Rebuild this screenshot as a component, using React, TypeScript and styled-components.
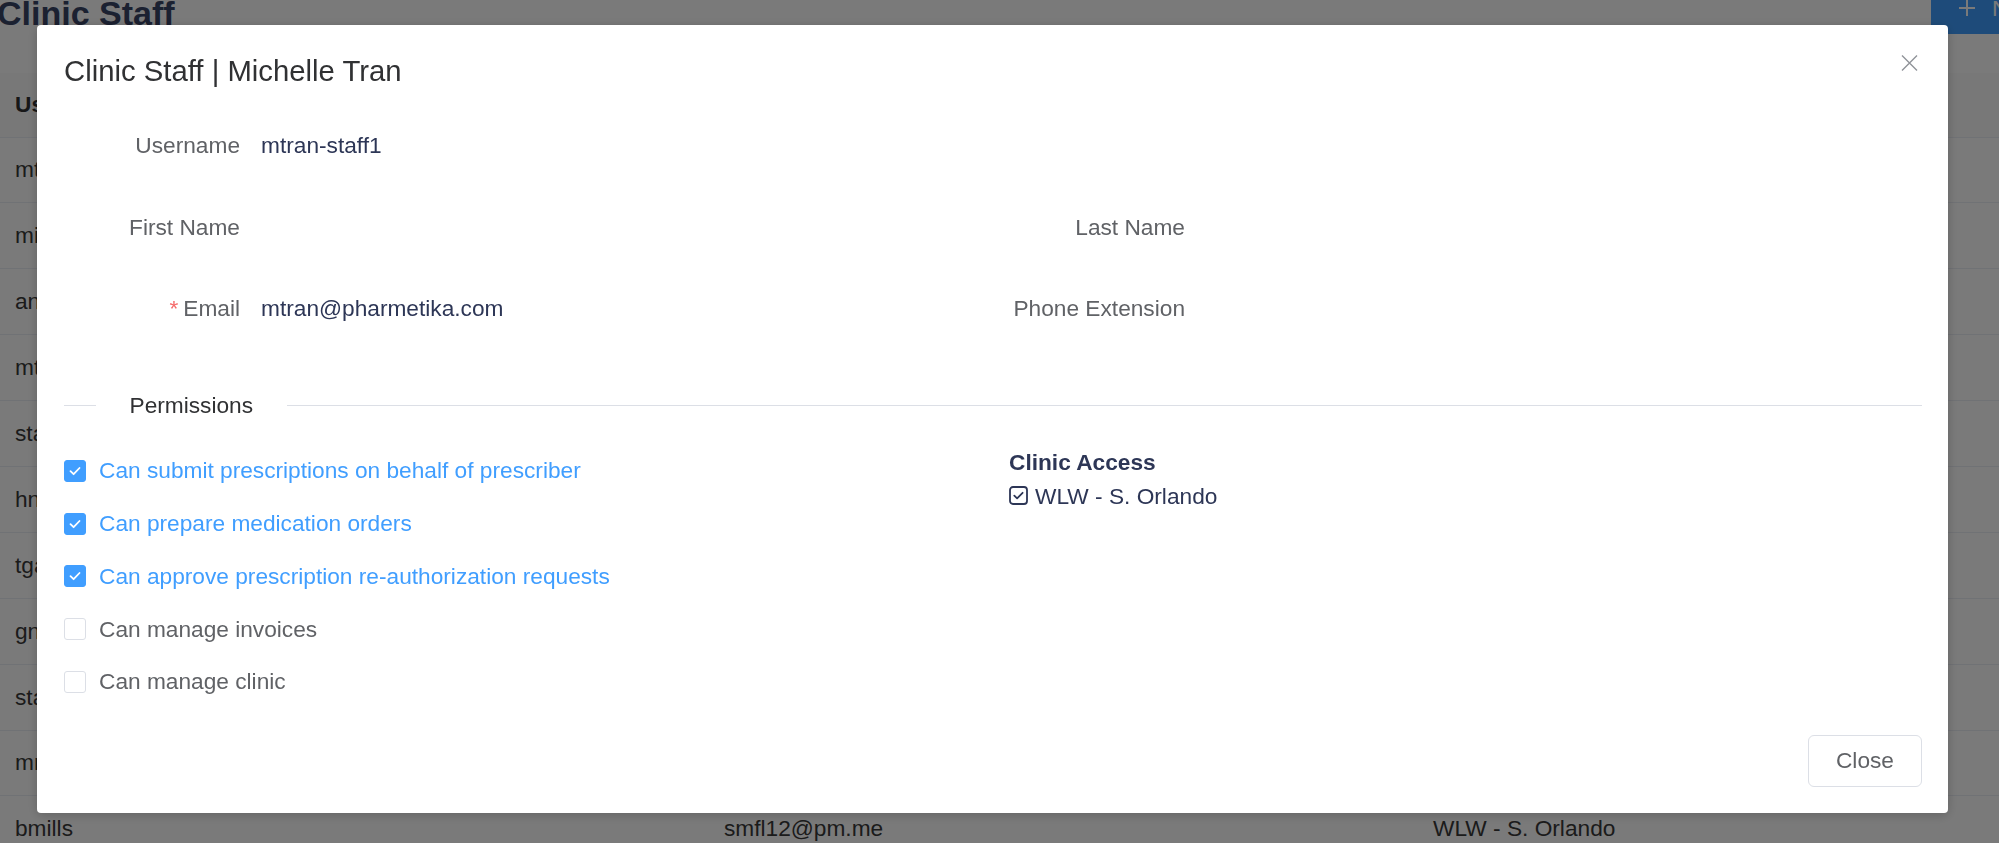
import React from 'react';
import styled, { createGlobalStyle } from 'styled-components';

const GlobalStyle = createGlobalStyle`
  html, body {
    margin: 0;
    padding: 0;
    overflow: hidden;
    background: #fff;
  }
  body {
    font-family: "Liberation Sans", Arial, Helvetica, sans-serif;
  }
  * { box-sizing: border-box; }
`;

/* ---------- page behind the dialog ---------- */

const Page = styled.div`
  width: 1999px;
  height: 843px;
  overflow: hidden;
  background: #fff;
  font-size: 22.7px;
  color: #3a3a3a;
`;

const PageHeader = styled.header`
  display: flex;
  align-items: flex-start;
  margin-top: -18px;
  height: 90.5px;
`;

const PageTitle = styled.h1`
  margin: 0 0 0 -3px;
  padding-top: 5px;
  font-size: 34px;
  line-height: 52px;
  font-weight: 700;
  color: #3a4566;
`;

const NewButton = styled.button`
  margin-left: auto;
  margin-right: -118px;
  height: 52px;
  display: flex;
  align-items: center;
  gap: 16px;
  padding: 0 27px;
  border: none;
  border-radius: 6px;
  background: #409eff;
  color: #fff;
  font-family: inherit;
  font-size: 22.7px;
  white-space: nowrap;
`;

const Table = styled.div`
  display: grid;
  grid-template-columns: 709px 709px 1fr;
`;

const HeadCell = styled.div`
  height: 65px;
  padding: 0 15px;
  display: flex;
  align-items: center;
  font-weight: 700;
  color: #303133;
  background: #fafafa;
  border-bottom: 1px solid #ebeef5;
`;

const Cell = styled.div`
  height: 65.9px;
  padding: 0 15px;
  display: flex;
  align-items: center;
  color: #3a3a3a;
  border-bottom: 1px solid #ebeef5;
`;

/* ---------- dialog ---------- */

const Mask = styled.div`
  position: fixed;
  inset: 0;
  background: rgba(0, 0, 0, 0.52);
`;

const ModalLayer = styled.div`
  position: fixed;
  inset: 0;
  padding: 25px 0 0 37px;
`;

const Modal = styled.div`
  width: 1911px;
  background: #fff;
  border-radius: 4px;
  padding: 26px 26px 26px 27px;
  box-shadow: 0 2px 12px rgba(0, 0, 0, 0.2);
  color: #606266;
  font-size: 22.7px;
`;

const ModalHeader = styled.div`
  display: flex;
  justify-content: space-between;
  align-items: flex-start;
`;

const ModalTitle = styled.h2`
  margin: 0;
  font-size: 29.3px;
  line-height: 40px;
  font-weight: 400;
  color: #303133;
`;

const CloseX = styled.button`
  margin: 4px 4px 0 0;
  padding: 0;
  border: none;
  background: none;
  width: 17px;
  height: 16px;
  display: flex;
`;

const FormGrid = styled.div`
  margin-top: 34px;
  display: grid;
  grid-template-columns: 1fr 1fr;
  column-gap: 32px;
  row-gap: 40.5px;
`;

const Field = styled.div<{ $full?: boolean }>`
  grid-column: ${({ $full }) => ($full ? '1 / -1' : 'auto')};
  margin-bottom: ${({ $full }) => ($full ? '2px' : '0')};
  display: flex;
  align-items: center;
  height: 40px;
`;

const Label = styled.span`
  width: 176px;
  flex-shrink: 0;
  text-align: right;
  color: #606266;
  white-space: nowrap;
`;

const Required = styled.span`
  color: #f56c6c;
  margin-right: 5px;
`;

const Value = styled.span`
  margin-left: 21px;
  color: #2d3656;
`;

const Divider = styled.div`
  margin-top: 57px;
  display: flex;
  align-items: center;
  height: 40px;
`;

const DividerLine = styled.div<{ $width?: number }>`
  height: 1px;
  background: #dcdfe6;
  ${({ $width }) => ($width ? `width: ${$width}px;` : 'flex: 1;')}
`;

const DividerText = styled.span`
  padding: 0 33.5px;
  color: #303133;
`;

const PermGrid = styled.div`
  margin-top: 19.6px;
  display: grid;
  grid-template-columns: 1fr 1fr;
  column-gap: 32px;
`;

const CheckList = styled.div`
  display: flex;
  flex-direction: column;
`;

const CheckItem = styled.label<{ $checked: boolean }>`
  height: 52.75px;
  display: flex;
  align-items: center;
  gap: 13px;
  color: ${({ $checked }) => ($checked ? '#409eff' : '#606266')};
  cursor: pointer;
`;

const CheckBoxMark = styled.span<{ $checked: boolean }>`
  width: 22px;
  height: 22px;
  flex-shrink: 0;
  border-radius: 3px;
  border: 1px solid ${({ $checked }) => ($checked ? '#409eff' : '#dcdfe6')};
  background: ${({ $checked }) => ($checked ? '#409eff' : '#fff')};
  display: flex;
  align-items: center;
  justify-content: center;
`;

const ClinicColumn = styled.div`
  padding-top: 1px;
  color: #2d3656;
`;

const ClinicTitle = styled.div`
  font-weight: 700;
  line-height: 32px;
`;

const ClinicItem = styled.div`
  display: flex;
  align-items: center;
  gap: 7px;
  line-height: 36px;
`;

const Footer = styled.div`
  margin-top: 26.6px;
  display: flex;
  justify-content: flex-end;
`;

const CloseButton = styled.button`
  height: 52px;
  padding: 0 27px;
  border: 1px solid #dcdfe6;
  border-radius: 6px;
  background: #fff;
  color: #606266;
  font-family: inherit;
  font-size: 22.7px;
`;

const rows = [
  ['mtran-staff1', 'mtran@pharmetika.com', 'WLW - S. Orlando'],
  ['mia.chen', 'mia.chen@pm.me', 'WLW - S. Orlando'],
  ['anguyen', 'anguyen@pm.me', 'WLW - S. Orlando'],
  ['mtran', 'mtran@pm.me', 'WLW - S. Orlando'],
  ['staff-02', 'staff02@pm.me', 'WLW - S. Orlando'],
  ['hnguyen', 'hnguyen@pm.me', 'WLW - S. Orlando'],
  ['tgarcia', 'tgarcia@pm.me', 'WLW - S. Orlando'],
  ['gnorris', 'gnorris@pm.me', 'WLW - S. Orlando'],
  ['staff-03', 'staff03@pm.me', 'WLW - S. Orlando'],
  ['mrivera', 'mrivera@pm.me', 'WLW - S. Orlando'],
  ['bmills', 'smfl12@pm.me', 'WLW - S. Orlando'],
];

const permissions = [
  { label: 'Can submit prescriptions on behalf of prescriber', checked: true },
  { label: 'Can prepare medication orders', checked: true },
  { label: 'Can approve prescription re-authorization requests', checked: true },
  { label: 'Can manage invoices', checked: false },
  { label: 'Can manage clinic', checked: false },
];

export default function App() {
  return (
    <>
      <GlobalStyle />
      <Page>
        <PageHeader>
          <PageTitle>Clinic Staff</PageTitle>
          <NewButton>
            <svg width="18" height="18" viewBox="0 0 18 18">
              <path d="M9 1v16M1 9h16" stroke="#fff" strokeWidth="2" fill="none" />
            </svg>
            New Staff
          </NewButton>
        </PageHeader>
        <Table>
          <HeadCell>Username</HeadCell>
          <HeadCell>Email</HeadCell>
          <HeadCell>Clinic</HeadCell>
          {rows.map((r) => (
            <React.Fragment key={r[0]}>
              <Cell>{r[0]}</Cell>
              <Cell>{r[1]}</Cell>
              <Cell>{r[2]}</Cell>
            </React.Fragment>
          ))}
        </Table>
      </Page>

      <Mask />
      <ModalLayer>
        <Modal>
          <ModalHeader>
            <ModalTitle>Clinic Staff | Michelle Tran</ModalTitle>
            <CloseX aria-label="Close">
              <svg width="17" height="16" viewBox="0 0 17 16">
                <path d="M1 0.5L16 15.5M16 0.5L1 15.5" stroke="#909399" strokeWidth="1.4" fill="none" />
              </svg>
            </CloseX>
          </ModalHeader>

          <FormGrid>
            <Field $full>
              <Label>Username</Label>
              <Value>mtran-staff1</Value>
            </Field>
            <Field>
              <Label>First Name</Label>
            </Field>
            <Field>
              <Label>Last Name</Label>
            </Field>
            <Field>
              <Label>
                <Required>*</Required>Email
              </Label>
              <Value>mtran@pharmetika.com</Value>
            </Field>
            <Field>
              <Label>Phone Extension</Label>
            </Field>
          </FormGrid>

          <Divider>
            <DividerLine $width={32} />
            <DividerText>Permissions</DividerText>
            <DividerLine />
          </Divider>

          <PermGrid>
            <CheckList>
              {permissions.map((p) => (
                <CheckItem key={p.label} $checked={p.checked}>
                  <CheckBoxMark $checked={p.checked}>
                    {p.checked && (
                      <svg width="14" height="12" viewBox="0 0 14 12">
                        <polyline
                          points="2.5 6.2 5.6 9.2 11.5 3"
                          stroke="#fff"
                          strokeWidth="1.8"
                          fill="none"
                          strokeLinecap="round"
                          strokeLinejoin="round"
                        />
                      </svg>
                    )}
                  </CheckBoxMark>
                  {p.label}
                </CheckItem>
              ))}
            </CheckList>
            <ClinicColumn>
              <ClinicTitle>Clinic Access</ClinicTitle>
              <ClinicItem>
                <svg width="19" height="19" viewBox="0 0 19 19">
                  <rect x="1" y="1" width="17" height="17" rx="3" stroke="#2d3656" strokeWidth="1.8" fill="none" />
                  <polyline
                    points="5.3 9.6 8.1 12.3 13.6 6.8"
                    stroke="#2d3656"
                    strokeWidth="1.8"
                    fill="none"
                    strokeLinecap="round"
                    strokeLinejoin="round"
                  />
                </svg>
                WLW - S. Orlando
              </ClinicItem>
            </ClinicColumn>
          </PermGrid>

          <Footer>
            <CloseButton>Close</CloseButton>
          </Footer>
        </Modal>
      </ModalLayer>
    </>
  );
}
